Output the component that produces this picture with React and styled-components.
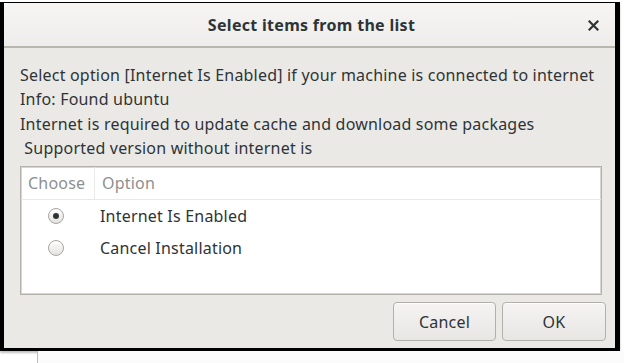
import React, { useState } from 'react';
import styled, { createGlobalStyle } from 'styled-components';

const Global = createGlobalStyle`
  html, body {
    margin: 0;
    padding: 0;
    background: #ffffff;
    font-family: "Noto Sans", "DejaVu Sans", sans-serif;
  }
`;

const Screen = styled.div`
  width: 624px;
  height: 363px;
  padding-top: 2px;
  box-sizing: border-box;
  background: #ffffff;
  overflow: hidden;
`;

const Frame = styled.div`
  width: 620px;
  box-sizing: border-box;
  border-left: 4px solid #000;
  border-right: 5px solid #000;
  border-top: 1px solid #000;
  border-bottom: 3px solid #000;
  box-shadow: 0 2px 2px rgba(0, 0, 0, 0.25);
`;

const Dialog = styled.div`
  display: flex;
  flex-direction: column;
  height: 345px;
  background: #ebe9e6;
  border-radius: 6px 6px 0 0;
  overflow: hidden;
`;

const TitleBar = styled.div`
  position: relative;
  display: flex;
  align-items: center;
  justify-content: center;
  height: 43px;
  flex-shrink: 0;
  background: linear-gradient(#f6f5f4, #eeedeb);
  border-bottom: 2px solid #b9b6b0;
`;

const Title = styled.h1`
  margin: 0 0 0 4px;
  font-size: 16px;
  font-weight: 700;
  letter-spacing: 0.3px;
  color: #2e3436;
`;

const Close = styled.button`
  position: absolute;
  right: 14px;
  top: 14px;
  width: 16px;
  height: 16px;
  padding: 0;
  border: none;
  background: none;
  display: flex;
  align-items: center;
  justify-content: center;
`;

const Body = styled.div`
  display: flex;
  flex-direction: column;
  padding: 15px 9px 0 16px;
  flex: 1;
`;

const Message = styled.p`
  margin: 0;
  font-size: 16px;
  letter-spacing: 0.2px;
  line-height: 24.3px;
  color: #2e3436;
  white-space: pre;
`;

const ListBox = styled.div`
  margin-top: 6px;
  height: 129px;
  width: 582px;
  box-sizing: border-box;
  background: #ffffff;
  border: 1px solid #b5b2ac;
  box-shadow: inset 0 0 0 1px #d8d6d2;
`;

const HeaderRow = styled.div`
  display: grid;
  grid-template-columns: 74px 1fr;
  height: 32px;
  border-bottom: 1px solid #e9e8e6;
`;

const HeaderCell = styled.div`
  display: flex;
  align-items: center;
  padding-left: 7px;
  font-size: 16px;
  letter-spacing: 0.2px;
  color: #8d9091;
  border-right: ${p => (p.$sep ? '1px solid #eceae8' : 'none')};
`;

const Row = styled.label`
  display: grid;
  grid-template-columns: 79px 1fr;
  height: 32px;
  align-items: center;
  cursor: default;
`;

const RadioCell = styled.div`
  display: flex;
  justify-content: center;
  padding-right: 9px;
`;

const Radio = styled.span`
  width: 14px;
  height: 14px;
  border-radius: 50%;
  border: 1px solid #a8a6a2;
  background: linear-gradient(#ffffff, #e4e2df);
  display: flex;
  align-items: center;
  justify-content: center;

  &::after {
    content: '';
    width: 6px;
    height: 6px;
    border-radius: 50%;
    background: #2e3436;
    display: ${p => (p.$on ? 'block' : 'none')};
  }
`;

const RowText = styled.span`
  font-size: 16px;
  letter-spacing: 0.2px;
  color: #2e3436;
`;

const Actions = styled.div`
  display: flex;
  justify-content: flex-end;
  gap: 6px;
  padding: 7px 0 0 0;
`;

const Button = styled.button`
  width: ${p => p.$w}px;
  height: 39px;
  font-family: inherit;
  font-size: 16px;
  letter-spacing: 0.2px;
  color: #2e3436;
  background: linear-gradient(#f5f4f3, #e8e6e3);
  border: 1px solid #b3b0aa;
  border-radius: 4px;
  box-shadow: inset 0 1px 0 #ffffff;
`;

const BelowStrip = styled.div`
  height: 12px;
  background: #fbfbfb;
  margin-left: 37px;
  border-left: 1px solid #bbbbbb;
`;

const options = ['Internet Is Enabled', 'Cancel Installation'];

export default function App() {
  const [choice, setChoice] = useState(0);

  return (
    <Screen>
      <Global />
      <Frame>
        <Dialog>
          <TitleBar>
            <Title>Select items from the list</Title>
            <Close aria-label="Close">
              <svg width="11" height="11" viewBox="0 0 11 11">
                <path d="M1.5 1.5 L9.5 9.5 M9.5 1.5 L1.5 9.5" stroke="#2e3436" strokeWidth="2.2" strokeLinecap="square" />
              </svg>
            </Close>
          </TitleBar>
          <Body>
            <Message>Select option [Internet Is Enabled] if your machine is connected to internet</Message>
            <Message>Info: Found ubuntu</Message>
            <Message>Internet is required to update cache and download some packages</Message>
            <Message> Supported version without internet is</Message>
            <ListBox>
              <HeaderRow>
                <HeaderCell $sep>Choose</HeaderCell>
                <HeaderCell>Option</HeaderCell>
              </HeaderRow>
              {options.map((o, i) => (
                <Row key={o} onClick={() => setChoice(i)}>
                  <RadioCell>
                    <Radio $on={choice === i} />
                  </RadioCell>
                  <RowText>{o}</RowText>
                </Row>
              ))}
            </ListBox>
            <Actions>
              <Button $w={103}>Cancel</Button>
              <Button $w={104}>OK</Button>
            </Actions>
          </Body>
        </Dialog>
      </Frame>
      <BelowStrip />
    </Screen>
  );
}
